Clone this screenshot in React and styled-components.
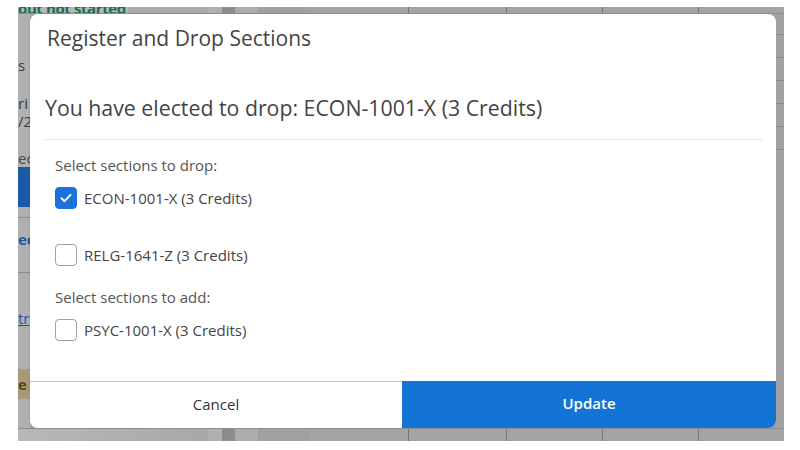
import React, { useState } from 'react';
import styled, { createGlobalStyle } from 'styled-components';

const GlobalStyle = createGlobalStyle`
    html, body {
        margin: 0;
        padding: 0;
        background: #ffffff;
        font-family: "Open Sans", "Liberation Sans", sans-serif;
    }
`

const sections = [
    { id: 'econ', label: 'ECON-1001-X (3 Credits)', group: 'drop' },
    { id: 'relg', label: 'RELG-1641-Z (3 Credits)', group: 'drop' },
    { id: 'psyc', label: 'PSYC-1001-X (3 Credits)', group: 'add' }
];

// the grey page cells peeking out above and below the dialog
const stripCells = [
    { width: 80, tone: '#aaaaaa' },
    { width: 14, tone: '#b0b0b0' },
    { width: 13, tone: '#8c8c8c' },
    { width: 23, tone: '#acacac' },
    { width: 52, tone: '#a0a0a0' },
    { width: 98, tone: '#a4a4a4' },
    { width: 98, tone: '#a4a4a4', lined: true },
    { width: 96, tone: '#a4a4a4', lined: true },
    { width: 96, tone: '#a4a4a4', lined: true },
    { grow: true, tone: '#a4a4a4', lined: true }
];

const CheckIcon = () => (
    <svg width="14" height="14" viewBox="0 0 14 14" fill="none">
        <path d="M2.5 7.2 L5.6 10.2 L11.5 3.8" stroke="#fff" strokeWidth="1.9" strokeLinecap="round" strokeLinejoin="round" />
    </svg>
);

const App = () => {
    const [checked, setChecked] = useState({ econ: true, relg: false, psyc: false });

    const toggle = (id) => {
        setChecked({
            ...checked,
            [id]: !checked[id]
        });
    }

    const renderRow = (s, spaced) => (
        <Row key={s.id} spaced={spaced} onClick={() => toggle(s.id)}>
            <Box checked={checked[s.id]}>{checked[s.id] && <CheckIcon />}</Box>
            <RowLabel>{s.label}</RowLabel>
        </Row>
    );

    const renderCells = () => stripCells.map((c, i) => (
        <StripCell key={i} width={c.width} grow={c.grow} tone={c.tone} lined={c.lined} />
    ));

    return(<Page>
        <GlobalStyle />
        <Backdrop>
            <TopStrip>
                <GreenText>out not started</GreenText>
                {renderCells()}
            </TopStrip>
            <LeftStrip>
                <SideText top={42} color="#3c3c3c">s</SideText>
                <SideText top={20} color="#3c3c3c">ri</SideText>
                <SideText top={0} color="#3c3c3c">/2</SideText>
                <SideText top={19} color="#4a4a4a">ec</SideText>
                <SideBlock />
                <SideRule top={10} />
                <SideText top={12} color="#1c58a8" bold>ec</SideText>
                <SideRule top={24} />
                <SideText top={36} color="#1c58a8" underline>tr</SideText>
                <SideTint>
                    <SideText top={0} color="#5c4510" bold>e</SideText>
                </SideTint>
            </LeftStrip>
            <Modal>
                <Header>
                    <Title>Register and Drop Sections</Title>
                </Header>
                <Body>
                    <Heading>You have elected to drop: ECON-1001-X (3 Credits)</Heading>
                    <Divider />
                    <Sections>
                        <GroupLabel>Select sections to drop:</GroupLabel>
                        {renderRow(sections[0], 12)}
                        {renderRow(sections[1], 35)}
                        <GroupLabel spaced={21}>Select sections to add:</GroupLabel>
                        {renderRow(sections[2], 12)}
                    </Sections>
                </Body>
                <Footer>
                    <FooterButton>Cancel</FooterButton>
                    <FooterButton primary>Update</FooterButton>
                </Footer>
            </Modal>
            <RightStrip>
                <SideRule top={20} />
                <SideRule top={22} />
                <SideRule top={22} />
                <SideRule top={22} />
                <SideRule top={22} />
                <SideRule top={22} />
            </RightStrip>
            <BottomStrip>
                <BottomLead />
                {renderCells().slice(1)}
            </BottomStrip>
        </Backdrop>
    </Page>);
}

export default App;

const Page = styled.div`
    width: 800px;
    height: 450px;
    padding: 7px 16px 9px 18px;
    box-sizing: border-box;
    background: #ffffff;
    overflow: hidden;
`

const Backdrop = styled.div`
    width: 766px;
    height: 434px;
    display: grid;
    grid-template-columns: 12px 746px 8px;
    grid-template-rows: 7px 414px 13px;
    background: #a6a6a6;
    overflow: hidden;
`

const TopStrip = styled.div`
    grid-column: 1 / 4;
    grid-row: 1;
    display: flex;
    border-bottom: 1px solid #8e8e8e;
    box-sizing: border-box;
`

const BottomStrip = styled.div`
    grid-column: 1 / 4;
    grid-row: 3;
    display: flex;
    border-top: 1px solid #8e8e8e;
    box-sizing: border-box;
`

const GreenText = styled.div`
    width: 110px;
    flex-shrink: 0;
    font-size: 15px;
    font-weight: 700;
    letter-spacing: -0.4px;
    color: #1f6a4b;
    line-height: 14px;
    margin-top: -6px;
    white-space: nowrap;
    overflow: hidden;
    background: #b4b8b6;
`

const BottomLead = styled.div`
    width: 190px;
    flex-shrink: 0;
    background: linear-gradient(90deg, #b8b8b8, #a8a8a8);
`

const StripCell = styled.div`
    width: ${p => p.grow ? 'auto' : p.width + 'px'};
    flex: ${p => p.grow ? '1' : '0 0 auto'};
    background: ${p => p.tone};
    border-left: ${p => p.lined ? '1px solid #777' : 'none'};
    box-sizing: border-box;
`

const LeftStrip = styled.div`
    grid-column: 1;
    grid-row: 2;
    display: flex;
    flex-direction: column;
    background: #b0b0b0;
    overflow: hidden;
`

const RightStrip = styled.div`
    grid-column: 3;
    grid-row: 2;
    display: flex;
    flex-direction: column;
    background: #a2a2a2;
`

const SideText = styled.div`
    margin-top: ${p => p.top}px;
    font-size: 15px;
    line-height: 18px;
    color: ${p => p.color};
    font-weight: ${p => p.bold ? 700 : 400};
    text-decoration: ${p => p.underline ? 'underline' : 'none'};
    white-space: nowrap;
`

const SideBlock = styled.div`
    height: 40px;
    background: #1a5aa6;
    flex-shrink: 0;
`

const SideRule = styled.div`
    margin-top: ${p => p.top}px;
    height: 0;
    border-top: 1px solid #8a8a8a;
    flex-shrink: 0;
`

const SideTint = styled.div`
    margin-top: 42px;
    height: 30px;
    padding-top: 6px;
    background: #a89a78;
    box-sizing: border-box;
`

const Modal = styled.div`
    grid-column: 2;
    grid-row: 2;
    background: #ffffff;
    border-radius: 8px;
    display: flex;
    flex-direction: column;
    overflow: hidden;
    box-shadow: 0 1px 3px rgba(0, 0, 0, 0.15);
`

const Header = styled.div`
    padding: 10px 17px 0;
`

const Title = styled.h2`
    margin: 0;
    font-family: "Open Sans", "Liberation Sans", sans-serif;
    font-size: 21px;
    font-weight: 400;
    line-height: 28px;
    color: #444444;
`

const Body = styled.div`
    flex: 1;
    padding: 42px 14px 0 15px;
`

const Heading = styled.h3`
    margin: 0;
    font-size: 21.3px;
    font-weight: 400;
    line-height: 28px;
    color: #444444;
`

const Divider = styled.hr`
    margin: 17px 0 0;
    border: none;
    border-top: 1px solid #e2e2e2;
`

const Sections = styled.div`
    padding: 15px 10px 0;
    display: flex;
    flex-direction: column;
    align-items: flex-start;
`

const GroupLabel = styled.div`
    margin-top: ${p => p.spaced || 0}px;
    font-size: 15px;
    line-height: 20px;
    color: #555555;
`

const Row = styled.label`
    margin-top: ${p => p.spaced}px;
    display: flex;
    align-items: center;
    gap: 7px;
    cursor: pointer;
`

const Box = styled.span`
    width: 22px;
    height: 22px;
    box-sizing: border-box;
    border-radius: 4px;
    display: flex;
    align-items: center;
    justify-content: center;
    background: ${p => p.checked ? '#1a73dc' : '#ffffff'};
    border: 1px solid ${p => p.checked ? '#1a73dc' : '#a0a0a0'};
`

const RowLabel = styled.span`
    font-size: 15px;
    line-height: 20px;
    color: #444444;
`

const Footer = styled.div`
    height: 46px;
    display: grid;
    grid-template-columns: 372px 1fr;
    border-top: 1px solid #c4c4c4;
`

const FooterButton = styled.button`
    border: none;
    margin: 0;
    padding: 0 0 3px;
    font-family: "Open Sans", "Liberation Sans", sans-serif;
    font-size: 15px;
    font-weight: ${p => p.primary ? 600 : 400};
    background: ${p => p.primary ? '#1474d6' : '#ffffff'};
    color: ${p => p.primary ? '#ffffff' : '#333333'};
    margin-top: ${p => p.primary ? '-1px' : '0'};
    cursor: pointer;
`
